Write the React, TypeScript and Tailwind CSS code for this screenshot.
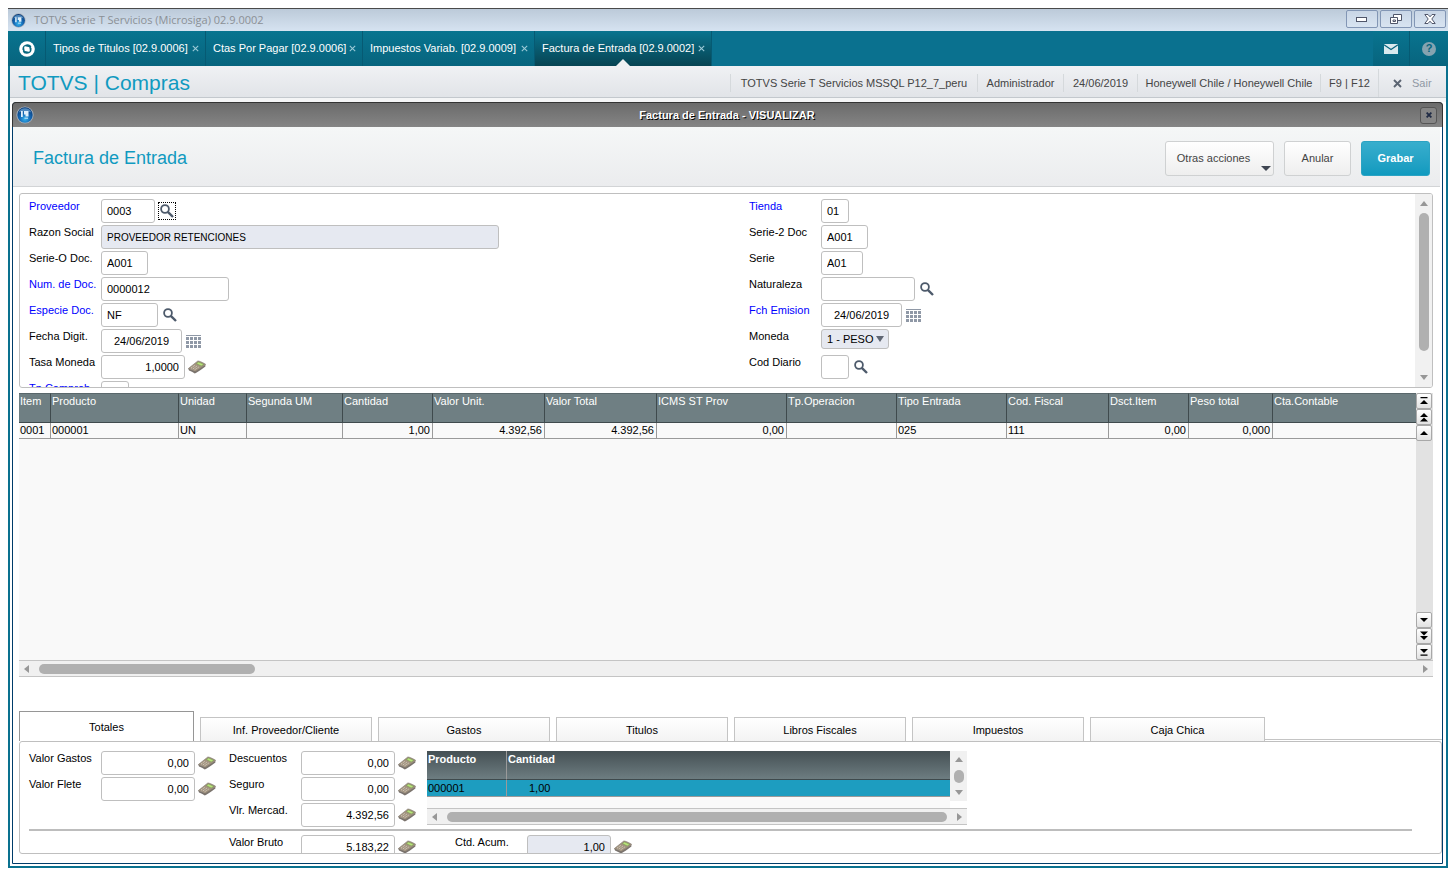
import type { ReactNode } from "react";

type IconKind = "search" | "searchFocused" | "calendar" | "calculator";

interface FieldDef {
  id: string;
  label: string;
  value?: string;
  width: string;
  required?: boolean;
  readOnly?: boolean;
  align?: string;
  textSize?: string;
  icon?: IconKind;
}

const windowTabs = [
  { title: "Tipos de Titulos [02.9.0006]", width: "w-[160px]" },
  { title: "Ctas Por Pagar [02.9.0006]", width: "w-[157px]" },
  { title: "Impuestos Variab. [02.9.0009]", width: "w-[172px]" },
  { title: "Factura de Entrada [02.9.0002]", width: "w-[177px]", active: true },
];

const statusItems = [
  { text: "TOTVS Serie T Servicios MSSQL P12_7_peru", width: "w-[247px]" },
  { text: "Administrador", width: "w-[86px]" },
  { text: "24/06/2019", width: "w-[74px]" },
  { text: "Honeywell Chile / Honeywell Chile", width: "w-[183px]" },
  { text: "F9 | F12", width: "w-[58px]" },
];

const leftFields: FieldDef[] = [
  { id: "proveedor", label: "Proveedor", value: "0003", width: "w-[54px]", required: true, icon: "searchFocused" },
  { id: "razon", label: "Razon Social", value: "PROVEEDOR RETENCIONES", width: "w-[398px]", readOnly: true, textSize: "text-[10px]" },
  { id: "serieO", label: "Serie-O Doc.", value: "A001", width: "w-[47px]" },
  { id: "numDoc", label: "Num. de Doc.", value: "0000012", width: "w-[128px]", required: true },
  { id: "especie", label: "Especie Doc.", value: "NF", width: "w-[57px]", required: true, icon: "search" },
  { id: "fecha", label: "Fecha Digit.", value: "24/06/2019", width: "w-[81px]", align: "text-center", icon: "calendar" },
  { id: "tasa", label: "Tasa Moneda", value: "1,0000", width: "w-[84px]", align: "text-right", icon: "calculator" },
  { id: "tpCons", label: "Tp Comprob.", width: "w-[28px]", required: true },
];

const rightFieldsTop: FieldDef[] = [
  { id: "tienda", label: "Tienda", value: "01", width: "w-[28px]", required: true },
  { id: "serie2", label: "Serie-2 Doc", value: "A001", width: "w-[47px]" },
  { id: "serie", label: "Serie", value: "A01", width: "w-[42px]" },
  { id: "naturaleza", label: "Naturaleza", width: "w-[94px]", icon: "search" },
  { id: "emision", label: "Fch Emision", value: "24/06/2019", width: "w-[81px]", required: true, align: "text-center", icon: "calendar" },
];

const columns = [
  { title: "Item", value: "0001", width: "w-[32px]" },
  { title: "Producto", value: "000001", width: "w-[128px]" },
  { title: "Unidad", value: "UN", width: "w-[68px]" },
  { title: "Segunda UM", value: "", width: "w-[96px]" },
  { title: "Cantidad", value: "1,00", width: "w-[90px]", right: true },
  { title: "Valor Unit.", value: "4.392,56", width: "w-[112px]", right: true },
  { title: "Valor Total", value: "4.392,56", width: "w-[112px]", right: true },
  { title: "ICMS ST Prov", value: "0,00", width: "w-[130px]", right: true },
  { title: "Tp.Operacion", value: "", width: "w-[110px]" },
  { title: "Tipo Entrada", value: "025", width: "w-[110px]" },
  { title: "Cod. Fiscal", value: "111", width: "w-[102px]" },
  { title: "Dsct.Item", value: "0,00", width: "w-[80px]", right: true },
  { title: "Peso total", value: "0,000", width: "w-[84px]", right: true },
  { title: "Cta.Contable", value: "", width: "" },
];

const detailTabs = ["Inf. Proveedor/Cliente", "Gastos", "Titulos", "Libros Fiscales", "Impuestos", "Caja Chica"];

function SphereIcon({ size }: { size: string }) {
  return (
    <svg viewBox="0 0 18 18" className={`${size} shrink-0`} aria-hidden="true">
      <defs>
        <radialGradient id="sphere" cx="0.5" cy="0.75" r="0.7">
          <stop offset="0" stopColor="#35b4ee" />
          <stop offset="0.5" stopColor="#1468b4" />
          <stop offset="1" stopColor="#0a3a78" />
        </radialGradient>
      </defs>
      <circle cx="9" cy="9" r="8.6" fill="#a9b3bd" />
      <circle cx="9" cy="9" r="7.7" fill="url(#sphere)" />
      <path d="M2.6 6.5 A7 7 0 0 1 15.4 6.5 Q9 4 2.6 6.5" fill="#7cb4e0" opacity="0.6" />
      <path d="M5 5 H6.8 V11 H5 Z M8 5 H12.5 V10.5 H9.5 V8.5 H8 Z" fill="#dff0fb" />
      <path d="M8.5 11.5 H12 V13 H8.5 Z" fill="#9fd4f0" />
    </svg>
  );
}

function SearchIcon() {
  return (
    <svg viewBox="0 0 14 14" className="size-[14px]" aria-hidden="true">
      <circle cx="5" cy="5" r="3.9" fill="#fff" stroke="#4d5a6b" strokeWidth="1.8" />
      <path d="M7.8 7.8 L13 13" stroke="#4d5a6b" strokeWidth="2.4" />
    </svg>
  );
}

function CalendarIcon() {
  return (
    <svg viewBox="0 0 15 13" className="h-[13px] w-[15px]" fill="#8f98a6" shapeRendering="crispEdges" aria-hidden="true">
      <rect width="15" height="1" />
      {[2, 6, 10].map((y) => [0, 4, 8, 12].map((x) => <rect key={`${x}-${y}`} x={x} y={y} width="3" height="3" />))}
    </svg>
  );
}

function CalculatorIcon() {
  return (
    <svg viewBox="0 0 18 14" className="h-[14px] w-[18px]" aria-hidden="true">
      <path d="M0.3 8.6 L1 10.4 Q4 11.6 6.8 13.4 Q9 13 17.4 6.6 V4.8 L7 11 Z" fill="#7a736d" />
      <path d="M0.3 8.6 Q4 5.6 9.8 1 Q11.5 0.8 17.6 4.2 Q17.8 5 7.2 11.6 Q4 9.6 0.3 8.6 Z" fill="#a3947f" stroke="#7d756c" strokeWidth="0.6" />
      <path d="M8.4 3.6 L10.6 2 L15.8 4.3 L13.2 6 Z" fill="#b8e27a" stroke="#71904f" strokeWidth="0.5" />
      <path d="M3 8.2 L7 5.2 M4.8 9 L9 6 M6.6 9.8 L10.8 7" stroke="#d9d3ca" strokeWidth="0.9" strokeDasharray="1.3 0.8" />
    </svg>
  );
}

function FieldIcon({ kind, label }: { kind: IconKind; label: string }) {
  if (kind === "searchFocused")
    return (
      <button type="button" aria-label={`Buscar ${label}`} className="ml-[3px] mt-[3px] flex size-[18px] items-center justify-center border border-dotted border-black">
        <SearchIcon />
      </button>
    );
  if (kind === "search")
    return (
      <button type="button" aria-label={`Buscar ${label}`} className="ml-[5px] mt-[5px] size-[14px]">
        <SearchIcon />
      </button>
    );
  if (kind === "calendar")
    return (
      <button type="button" aria-label={`Calendario ${label}`} className="ml-1 mt-[6px] h-[13px] w-[15px]">
        <CalendarIcon />
      </button>
    );
  return (
    <button type="button" aria-label={`Calculadora ${label}`} className="ml-[3px] mt-[5px] h-[14px] w-[18px]">
      <CalculatorIcon />
    </button>
  );
}

function Field({ field }: { field: FieldDef }) {
  return (
    <div className="flex h-[26px] shrink-0 items-start">
      <label htmlFor={field.id} className={`w-[72px] shrink-0 whitespace-nowrap leading-[14px] ${field.required ? "text-[#0000ff]" : "text-black"}`}>
        {field.label}
      </label>
      <input
        id={field.id}
        defaultValue={field.value}
        readOnly={field.readOnly}
        className={`h-6 shrink-0 rounded-[3px] border border-[#bfbfbf] px-[5px] text-black ${field.width} ${field.align ?? ""} ${field.textSize ?? ""} ${
          field.readOnly ? "bg-[#e6e9f1]" : "bg-white"
        }`}
      />
      {field.icon && <FieldIcon kind={field.icon} label={field.label} />}
    </div>
  );
}

function Arrow({ d }: { d: "up" | "down" | "left" | "right" }) {
  const paths = { up: "M0 7 L4 2 L8 7 Z", down: "M0 1 L8 1 L4 6 Z", left: "M6 0 L6 8 L1 4 Z", right: "M2 0 L7 4 L2 8 Z" };
  return (
    <svg viewBox="0 0 8 8" className="size-2 shrink-0" aria-hidden="true">
      <path d={paths[d]} fill="#979797" />
    </svg>
  );
}

function NavButton({ label, d }: { label: string; d: string }) {
  return (
    <button
      type="button"
      aria-label={label}
      className="flex size-4 items-center justify-center rounded-[2px] border border-[#a8a8a8] bg-linear-to-b from-white to-[#e2e2e2]"
    >
      <svg viewBox="0 0 8 10" className="h-[10px] w-2" aria-hidden="true">
        <path d={d} fill="#000" />
      </svg>
    </button>
  );
}

function HScroll({ thumb }: { thumb: string }) {
  return (
    <div className="flex h-[17px] items-center border-y border-[#c4c4c4] bg-[#f0f0f0] px-1">
      <Arrow d="left" />
      <div className="mx-2 flex-1">
        <div className={`h-[10px] rounded-full bg-[#b0b0b0] ${thumb}`} />
      </div>
      <Arrow d="right" />
    </div>
  );
}

function Caption({ label, children }: { label: string; children: ReactNode }) {
  return (
    <button
      type="button"
      aria-label={label}
      className="flex h-[18px] w-8 items-center justify-center rounded-[2px] border border-[#8296b5] bg-linear-to-b from-[#c9d6e6] to-[#d8e4f1]"
    >
      {children}
    </button>
  );
}

function TitleBar() {
  return (
    <div className="flex h-[23px] items-center border-t border-[#4a4a4a] bg-linear-to-b from-[#bccad9] to-[#d6e3f1] pl-[3px] pr-[2px]">
      <SphereIcon size="size-[15px]" />
      <span className="ml-2 flex-1 font-['Open_Sans',sans-serif] text-[#8b9096]">TOTVS Serie T Servicios (Microsiga) 02.9.0002</span>
      <div className="flex gap-[2px] pb-[2px]">
        <Caption label="Minimizar">
          <svg viewBox="0 0 12 6" className="h-[6px] w-3">
            <rect x="0.5" y="1.5" width="10" height="4" fill="#fff" stroke="#50566a" />
          </svg>
        </Caption>
        <Caption label="Restaurar">
          <svg viewBox="0 0 12 10" className="h-[10px] w-3" fill="#fff" stroke="#50566a">
            <path d="M3.5 0.5 H11.5 V6.5 H3.5 Z" />
            <path d="M0.5 3.5 H7.5 V9.5 H0.5 Z M3 6 H5.5 V7.5 H3 Z" />
          </svg>
        </Caption>
        <Caption label="Cerrar">
          <svg viewBox="0 0 12 10" className="h-[10px] w-3" fill="#fff" stroke="#50566a">
            <path d="M0.8 0.5 H4 L6 2.8 L8 0.5 H11.2 L7.8 5 L11.2 9.5 H8 L6 7.2 L4 9.5 H0.8 L4.2 5 Z" />
          </svg>
        </Caption>
      </div>
    </div>
  );
}

function TabBar() {
  return (
    <nav className="flex h-[35px] bg-[#0a718f] text-white">
      <button type="button" aria-label="Inicio" className="flex w-[38px] items-center justify-center border-r border-[#065a73] bg-linear-to-b from-[#09748f] to-[#07647e]">
        <svg viewBox="0 0 16 16" className="size-4">
          <circle cx="8" cy="8" r="7.8" fill="#fff" />
          <path d="M3.4 8.6 Q3.2 4 8 3.2 Q11.6 3 12.4 6 L11.6 6.6 L6.2 5.2 Q4.8 5.4 5.2 7.2 L5.8 10.8 Q4 10.6 3.4 8.6 Z" fill="#08687f" />
          <path d="M12.6 7.4 Q12.8 12 8 12.8 Q4.6 13 3.8 10.4 L4.6 9.8 L9.8 10.8 Q11.2 10.6 10.8 9 L10.2 5.4 Q12 5.4 12.6 7.4 Z" fill="#08687f" />
          <path d="M6.4 6.4 L9.4 7 L9.8 9.6 L6.8 9 Z" fill="#fff" />
        </svg>
      </button>
      {windowTabs.map((t) => (
        <div
          key={t.title}
          className={`relative flex shrink-0 items-center justify-between whitespace-nowrap border-r border-[#065a73] bg-linear-to-b from-[#09748f] pl-[7px] pr-[6px] ${t.width} ${
            t.active ? "to-[#074453]" : "to-[#07647e]"
          }`}
        >
          <a href="#tab">{t.title}</a>
          <button type="button" aria-label={`Cerrar ${t.title}`}>
            <svg viewBox="0 0 7 7" className="size-[7px]">
              <path d="M0.8 0.8 L6.2 6.2 M6.2 0.8 L0.8 6.2" stroke="#9ccad7" strokeWidth="1.1" />
            </svg>
          </button>
          {t.active && (
            <svg viewBox="0 0 14 7" className="absolute bottom-0 left-1/2 h-[7px] w-[14px] -translate-x-1/2">
              <path d="M0 7 L7 0 L14 7 Z" fill="#eff1f3" />
            </svg>
          )}
        </div>
      ))}
      <div className="flex-1" />
      <button type="button" aria-label="Mensajes" className="flex w-[37px] items-center justify-center border-r border-[#065a73] bg-linear-to-b from-[#09748f] to-[#07647e]">
        <svg viewBox="0 0 14 10" className="h-[10px] w-[14px]">
          <rect width="14" height="10" fill="#d9e9ee" />
          <path d="M0 0.8 L7 5.6 L14 0.8" fill="none" stroke="#07647e" strokeWidth="1.2" />
        </svg>
      </button>
      <button type="button" aria-label="Ayuda" className="flex w-[38px] items-center justify-center bg-linear-to-b from-[#09748f] to-[#07647e]">
        <span className="flex size-[14px] items-center justify-center rounded-full bg-[#86a3b0] font-bold leading-none text-[#07647e]">?</span>
      </button>
    </nav>
  );
}

function StatusBar() {
  return (
    <header className="flex h-8 items-center border-b border-[#c3c8cd] bg-linear-to-b from-[#f0f1f4] to-[#e1e4e8] pt-[3px] text-[#444]">
      <h1 className="flex-1 whitespace-nowrap pl-2 text-[21px] leading-7 text-[#109ac0]">TOTVS | Compras</h1>
      {statusItems.map((s) => (
        <div key={s.text} className={`flex h-[18px] shrink-0 items-center justify-center whitespace-nowrap border-l border-[#d5d9dc] ${s.width}`}>
          {s.text}
        </div>
      ))}
      <button type="button" className="flex h-7 w-[68px] items-center gap-[10px] border-l border-[#d5d9dc] pl-[14px] text-[#9098a4]">
        <svg viewBox="0 0 9 9" className="size-[9px]">
          <path d="M1 1 L8 8 M8 1 L1 8" stroke="#5b6472" strokeWidth="1.9" />
        </svg>
        Sair
      </button>
    </header>
  );
}

function Toolbar() {
  const plain = "rounded-[3px] border border-[#cfd1d2] bg-linear-to-b from-white to-[#eeeeee] text-[#444]";
  return (
    <div className="mr-[2px] flex h-[60px] items-center border-b border-[#d2d4d6] bg-linear-to-b from-[#f5f7f7] to-[#ebecee] pl-5 pr-[10px] pt-1">
      <h2 className="flex-1 text-[18px] text-[#109ac0]">Factura de Entrada</h2>
      <div className="flex gap-[10px]">
        <button type="button" className={`relative h-[35px] w-[109px] pr-3 ${plain}`}>
          Otras acciones
          <svg viewBox="0 0 10 5" className="absolute bottom-1 right-[2px] h-[5px] w-[10px]">
            <path d="M0 0 H10 L5 5 Z" fill="#3f4652" />
          </svg>
        </button>
        <button type="button" className={`h-[35px] w-[67px] ${plain}`}>
          Anular
        </button>
        <button type="button" className="h-[35px] w-[69px] rounded-[3px] border border-[#2ba3c3] bg-linear-to-b from-[#37aecd] to-[#0f9abf] font-bold text-white">
          Grabar
        </button>
      </div>
    </div>
  );
}

function HeaderForm() {
  return (
    <section className="flex h-[195px] overflow-hidden rounded-[3px] border border-[#bfbfbf] bg-white">
      <div className="flex min-w-0 flex-1 pl-[9px]">
        <div className="flex w-[720px] flex-col overflow-hidden pt-[5px]">
          {leftFields.map((f) => (
            <Field key={f.id} field={f} />
          ))}
        </div>
        <div className="flex flex-1 flex-col overflow-hidden pt-[5px]">
          {rightFieldsTop.map((f) => (
            <Field key={f.id} field={f} />
          ))}
          <div className="flex h-[26px] items-start">
            <label htmlFor="moneda" className="w-[72px] leading-[14px] text-black">
              Moneda
            </label>
            <div className="relative flex">
              <select id="moneda" className="h-5 w-[68px] appearance-none rounded-[3px] border border-[#bfbfbf] bg-[#e6e9f1] pl-[5px] text-black">
                <option>1 - PESO</option>
              </select>
              <svg viewBox="0 0 8 6" className="pointer-events-none absolute right-[5px] top-[7px] h-[6px] w-2">
                <path d="M0 0 H8 L4 6 Z" fill="#5f6673" />
              </svg>
            </div>
          </div>
          <Field field={{ id: "diario", label: "Cod Diario", width: "w-[28px]", icon: "search" }} />
        </div>
      </div>
      <div className="flex w-[17px] flex-col items-center bg-[#f1f1f1] py-[5px]">
        <Arrow d="up" />
        <div className="mt-[6px] h-[138px] w-[10px] rounded-full bg-[#b0b0b0]" />
        <div className="flex-1" />
        <Arrow d="down" />
      </div>
    </section>
  );
}

function ItemsGrid() {
  return (
    <section className="mt-[5px] flex flex-1 flex-col">
      <div className="flex flex-1">
        <div className="min-w-0 flex-1 overflow-hidden bg-[#f9f9f9]">
          <table className="w-full table-fixed border-separate border-spacing-0 text-left">
            <thead>
              <tr className="h-[30px] bg-[#6f7f83] text-white">
                {columns.map((c) => (
                  <th
                    key={c.title}
                    className={`overflow-hidden whitespace-nowrap border-b border-r border-t border-[#3f4a4d] border-t-[#59676b] pl-px align-top font-normal leading-[14px] last:border-r-0 ${c.width}`}
                  >
                    {c.title}
                  </th>
                ))}
              </tr>
            </thead>
            <tbody>
              <tr className="h-4 text-black">
                {columns.map((c) => (
                  <td key={c.title} className={`border-b border-r border-[#9a9a9a] pl-px pr-[2px] leading-[15px] last:border-r-0 ${c.right ? "text-right" : ""}`}>
                    {c.value}
                  </td>
                ))}
              </tr>
            </tbody>
          </table>
        </div>
        <div className="flex w-[17px] flex-col justify-between bg-[#e2e2e2]">
          <div className="flex flex-col">
            <NavButton label="Primero" d="M0.5 1 H7.5 V2.2 H0.5 Z M0 8 L4 4 L8 8 Z" />
            <NavButton label="Pagina anterior" d="M0 5 L4 1 L8 5 Z M0 9.5 L4 5.5 L8 9.5 Z" />
            <NavButton label="Anterior" d="M0 7 L4 3 L8 7 Z" />
          </div>
          <div className="flex flex-col">
            <NavButton label="Siguiente" d="M0 3 H8 L4 7 Z" />
            <NavButton label="Pagina siguiente" d="M0 0.5 H8 L4 4.5 Z M0 5 H8 L4 9 Z" />
            <NavButton label="Ultimo" d="M0 2 H8 L4 6 Z M0.5 7.6 H7.5 V8.8 H0.5 Z" />
          </div>
        </div>
      </div>
      <HScroll thumb="w-[216px]" />
    </section>
  );
}

function ProductGrid() {
  return (
    <div className="w-[540px] shrink-0">
      <div className="flex h-[57px]">
        <div className="flex-1 bg-[#f9f9f9]">
          <table className="w-full table-fixed border-separate border-spacing-0 text-left">
            <thead>
              <tr className="h-[29px] bg-linear-to-b from-[#455054] to-[#6f7f83] text-white">
                <th className="w-20 border-b border-r border-[#3f4a4d] border-r-[#9a9a9a] pl-px align-top leading-4">Producto</th>
                <th className="border-b border-[#3f4a4d] pl-px align-top leading-4">Cantidad</th>
              </tr>
            </thead>
            <tbody>
              <tr className="h-[17px] bg-[#1d9dc0] text-black">
                <td className="border-b border-r border-[#9a9a9a] pl-px leading-4">000001</td>
                <td className="border-b border-[#9a9a9a] pl-[22px] leading-4">1,00</td>
              </tr>
            </tbody>
          </table>
        </div>
        <div className="flex h-[50px] w-[17px] flex-col items-center justify-between bg-[#f1f1f1] py-1">
          <Arrow d="up" />
          <div className="h-[13px] w-[10px] rounded-full bg-[#b0b0b0]" />
          <Arrow d="down" />
        </div>
      </div>
      <HScroll thumb="w-full" />
    </div>
  );
}

function DetailTabs() {
  const money = "w-[94px]";
  return (
    <section className="mt-[34px]">
      <div className="flex h-[30px] items-end gap-[6px] text-black" role="tablist">
        <button type="button" role="tab" aria-selected="true" className="h-[30px] w-[175px] border border-b-0 border-[#969696] bg-white pt-[2px]">
          Totales
        </button>
        {detailTabs.map((t) => (
          <button key={t} type="button" role="tab" className="h-6 w-[172px] border border-b-0 border-[#c4c4c4] bg-linear-to-b from-white to-[#f3f3f3] pt-px last-of-type:w-[175px]">
            {t}
          </button>
        ))}
        <div className="-ml-[6px] h-[2px] flex-1 border-t border-[#c4c4c4]" />
      </div>
      <div className="h-[113px] overflow-hidden rounded-[3px] border border-[#bfbfbf] bg-white px-[9px] pt-[9px]">
        <div className="flex h-[78px]">
          <div className="w-[200px]">
            <Field field={{ id: "gastos", label: "Valor Gastos", value: "0,00", width: money, align: "text-right", icon: "calculator" }} />
            <Field field={{ id: "flete", label: "Valor Flete", value: "0,00", width: money, align: "text-right", icon: "calculator" }} />
          </div>
          <div className="w-[198px]">
            <Field field={{ id: "descuentos", label: "Descuentos", value: "0,00", width: money, align: "text-right", icon: "calculator" }} />
            <Field field={{ id: "seguro", label: "Seguro", value: "0,00", width: money, align: "text-right", icon: "calculator" }} />
            <Field field={{ id: "mercad", label: "Vlr. Mercad.", value: "4.392,56", width: money, align: "text-right", icon: "calculator" }} />
          </div>
          <ProductGrid />
        </div>
        <hr className="mr-5 h-[2px] border-0 bg-[#bdbdbd]" />
        <div className="flex pl-[200px] pt-1">
          <div className="w-[226px]">
            <Field field={{ id: "bruto", label: "Valor Bruto", value: "5.183,22", width: money, align: "text-right", icon: "calculator" }} />
          </div>
          <Field field={{ id: "acum", label: "Ctd. Acum.", value: "1,00", width: "w-[84px]", align: "text-right", readOnly: true, icon: "calculator" }} />
        </div>
      </div>
    </section>
  );
}

export default function App() {
  return (
    <div className="flex min-h-screen flex-col bg-white p-2 font-['Liberation_Sans',Arial,sans-serif] text-[11px]">
      <TitleBar />
      <div className="flex flex-1 flex-col border-x-2 border-b-2 border-[#0a718f]">
        <div className="-mx-[2px]">
          <TabBar />
        </div>
        <StatusBar />
        <div className="h-1 bg-[#f4f5f6]" />
        <main className="mb-[2px] ml-[2px] mr-[3px] flex flex-1 flex-col rounded-t-[4px] border border-[#003c6a]">
          <div className="-mx-px -mt-px flex h-[25px] items-center rounded-t-[4px] border border-b-0 border-[#333] bg-linear-to-b from-[#6b6b6b] to-[#858585] pl-[3px] pr-[5px]">
            <SphereIcon size="size-[18px]" />
            <div className="flex-1 text-center font-bold text-white [text-shadow:1px_1px_0_#000]">Factura de Entrada - VISUALIZAR</div>
            <button type="button" aria-label="Cerrar ventana" className="flex size-[17px] items-center justify-center rounded-[3px] border border-[#555] bg-[#858585]">
              <svg viewBox="0 0 6 6" className="size-[6px]">
                <path d="M0.6 0.6 L5.4 5.4 M5.4 0.6 L0.6 5.4" stroke="#1f2a44" strokeWidth="1.8" />
              </svg>
            </button>
          </div>
          <Toolbar />
          <div className="flex flex-1 flex-col pb-[9px] pl-[6px] pt-[6px]">
            <div className="mr-[9px] flex flex-1 flex-col">
              <HeaderForm />
              <ItemsGrid />
            </div>
            <DetailTabs />
          </div>
        </main>
      </div>
    </div>
  );
}
